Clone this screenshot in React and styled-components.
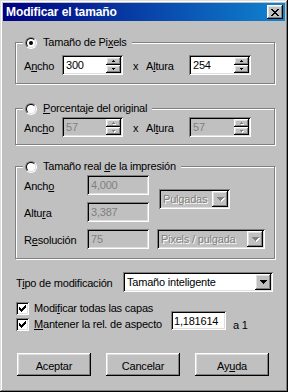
import React from 'react';
import styled, { createGlobalStyle } from 'styled-components';

const GlobalStyle = createGlobalStyle`
  html, body { margin: 0; padding: 0; background: #c0c0c0; }
  body {
    font-family: "Liberation Sans", Arial, sans-serif;
    font-size: 11px;
    letter-spacing: -0.2px;
    color: #000;
  }
  * { box-sizing: border-box; }
  u { text-decoration: underline; text-underline-offset: 1px; }
`;

const pix = (rows) => {
  let d = '';
  rows.forEach((r, y) => {
    [...r].forEach((c, x) => {
      if (c === 'X') d += `M${x} ${y}h1v1h-1z`;
    });
  });
  return d;
};

const CLOSE = [
  'XX....XX',
  '.XX..XX.',
  '..XXXX..',
  '...XX...',
  '..XXXX..',
  '.XX..XX.',
  'XX....XX',
];
const DOWN = ['XXXXXXX', '.XXXXX.', '..XXX..', '...X...'];
const SPIN_UP = ['.X.', 'XXX'];
const SPIN_DOWN = ['XXX', '.X.'];
const CHECK = [
  '......X',
  '.....XX',
  'X...XXX',
  'XX.XXX.',
  'XXXXX..',
  '.XXX...',
  '..X....',
];

const Svg = styled.svg`
  display: block;
  flex-shrink: 0;
`;

const Glyph = ({ rows, disabled }) => {
  const w = rows[0].length;
  const h = rows.length;
  const d = pix(rows);
  return (
    <Svg width={w + 1} height={h + 1} shapeRendering="crispEdges">
      {disabled && <path d={d} fill="#fff" transform="translate(1 1)" />}
      <path d={d} fill={disabled ? '#808080' : '#000'} />
    </Svg>
  );
};

const raised = `
  background: #c0c0c0;
  box-shadow: inset -1px -1px #000, inset 1px 1px #fff, inset -2px -2px #808080, inset 2px 2px #dfdfdf;
`;
const sunken = `
  box-shadow: inset 1px 1px #808080, inset -1px -1px #fff, inset 2px 2px #000, inset -2px -2px #dfdfdf;
`;

const Window = styled.div`
  width: 288px;
  height: 392px;
  padding: 3px;
  background: #c0c0c0;
  box-shadow: inset -1px -1px #000, inset 1px 1px #dfdfdf, inset -2px -2px #808080, inset 2px 2px #fff;
  display: flex;
  flex-direction: column;
`;

const TitleBar = styled.div`
  height: 18px;
  background: linear-gradient(to right, #000080, #1084d0);
  display: flex;
  align-items: center;
  padding: 0 2px 0 3px;
`;

const Title = styled.span`
  color: #fff;
  font-weight: bold;
  font-size: 12px;
  letter-spacing: -0.1px;
`;

const CloseBtn = styled.div`
  ${raised}
  margin-left: auto;
  width: 16px;
  height: 14px;
  display: flex;
  align-items: center;
  justify-content: center;
  padding: 1px 0 0 1px;
`;

const Body = styled.div`
  display: flex;
  flex-direction: column;
  padding: 0 10px 0 12px;
`;

const Group = styled.fieldset`
  margin: ${(p) => p.$top}px 0 0;
  padding: 0;
  min-width: 0;
  border: 1px solid #808080;
  box-shadow: inset 1px 1px #fff, 1px 1px #fff;
`;

const Legend = styled.legend`
  margin-left: 7px;
  padding: 0 5px 0 2px;
  height: 13px;
  display: flex;
  align-items: center;
  gap: 6px;
  background: #c0c0c0;
  line-height: 13px;
`;

const GroupBody = styled.div`
  padding: ${(p) => p.$pt}px 8px ${(p) => p.$pb}px 8px;
`;

const RadioOuter = styled.span`
  width: 12px;
  height: 12px;
  border-radius: 50%;
  border: 1px solid;
  border-color: #808080 #fff #fff #808080;
  display: flex;
  flex-shrink: 0;
`;
const RadioInner = styled.span`
  flex: 1;
  border-radius: 50%;
  border: 1px solid;
  border-color: #000 #dfdfdf #dfdfdf #000;
  background: #fff;
  display: flex;
  align-items: center;
  justify-content: center;
`;
const Dot = styled.span`
  width: 4px;
  height: 4px;
  border-radius: 50%;
  background: #000;
`;

const Radio = ({ checked }) => (
  <RadioOuter>
    <RadioInner>{checked && <Dot />}</RadioInner>
  </RadioOuter>
);

const Row = styled.div`
  display: flex;
  align-items: center;
`;

const Label = styled.span`
  width: ${(p) => (p.$w ? `${p.$w}px` : 'auto')};
  flex-shrink: 0;
  padding-top: 1px;
  white-space: nowrap;
`;

const Times = styled.span`
  width: 23px;
  padding-left: 10px;
  padding-top: 1px;
  flex-shrink: 0;
`;

const Field = styled.div`
  width: ${(p) => p.$w}px;
  height: ${(p) => p.$h || 20}px;
  flex-shrink: 0;
  background: ${(p) => (p.$disabled ? '#c0c0c0' : '#fff')};
  color: ${(p) => (p.$disabled ? '#808080' : '#000')};
  ${sunken}
  padding: 2px;
  display: flex;
  align-items: center;
`;

const FieldText = styled.span`
  flex: 1;
  padding-left: ${(p) => p.$pl ?? 2}px;
  white-space: nowrap;
  overflow: hidden;
  text-shadow: ${(p) => (p.$emboss ? '1px 1px #fff' : 'none')};
`;

const SpinCol = styled.div`
  width: 15px;
  align-self: stretch;
  display: flex;
  flex-direction: column;
`;

const SpinBtn = styled.div`
  ${raised}
  flex: 1;
  display: flex;
  align-items: center;
  justify-content: center;
  padding-left: 1px;
`;

const DropBtn = styled.div`
  ${raised}
  width: 16px;
  align-self: stretch;
  display: flex;
  align-items: center;
  justify-content: center;
  padding: 1px 0 0 1px;
`;

const SpinField = ({ w, value, disabled }) => (
  <Field $w={w} $disabled={disabled}>
    <FieldText>{value}</FieldText>
    <SpinCol>
      <SpinBtn><Glyph rows={SPIN_UP} disabled={disabled} /></SpinBtn>
      <SpinBtn><Glyph rows={SPIN_DOWN} disabled={disabled} /></SpinBtn>
    </SpinCol>
  </Field>
);

const Combo = ({ w, text, disabled, className }) => (
  <Field $w={w} $disabled={disabled} className={className}>
    <FieldText $emboss={disabled}>{text}</FieldText>
    <DropBtn><Glyph rows={DOWN} disabled={disabled} /></DropBtn>
  </Field>
);

const PrintGrid = styled.div`
  display: grid;
  grid-template-columns: 63px 62px 1fr;
  grid-template-rows: repeat(3, 20px);
  row-gap: 7px;
  align-items: center;
`;

const UnitCombo = styled(Combo)`
  grid-column: 3;
  grid-row: ${(p) => p.$row};
  align-self: center;
  margin-left: ${(p) => p.$ml}px;
`;

const TypeRow = styled.div`
  display: flex;
  align-items: center;
  margin-top: 13px;
  padding-left: 1px;
`;

const CheckRow = styled.div`
  display: flex;
  align-items: flex-start;
  margin-top: ${(p) => p.$mt}px;
  padding-left: 1px;
`;

const CheckLabel = styled.label`
  display: flex;
  align-items: center;
  gap: 5px;
  width: ${(p) => (p.$w ? `${p.$w}px` : 'auto')};
  margin-top: ${(p) => p.$mt || 0}px;
  white-space: nowrap;
  line-height: 13px;
`;

const Box = styled.span`
  width: 13px;
  height: 13px;
  flex-shrink: 0;
  background: #fff;
  ${sunken}
  display: flex;
  align-items: center;
  justify-content: center;
`;

const Check = () => (
  <Box>
    <Svg width="7" height="7" shapeRendering="crispEdges">
      <path d={pix(CHECK)} fill="#000" />
    </Svg>
  </Box>
);

const Suffix = styled.span`
  margin: 8px 0 0 7px;
  line-height: 13px;
`;

const ButtonRow = styled.div`
  display: flex;
  gap: 15px;
  margin-top: 21px;
  padding-left: 2px;
`;

const Button = styled.div`
  ${raised}
  width: 74px;
  height: 23px;
  display: flex;
  align-items: center;
  justify-content: center;
  padding-top: 2px;
`;

export default function App() {
  return (
    <>
      <GlobalStyle />
      <Window>
        <TitleBar>
          <Title>Modificar el tamaño</Title>
          <CloseBtn><Glyph rows={CLOSE} /></CloseBtn>
        </TitleBar>
        <Body>
          <Group $top={15}>
            <Legend>
              <Radio checked />
              <span>Tamaño de Pi<u>x</u>els</span>
            </Legend>
            <GroupBody $pt={6} $pb={8}>
              <Row>
                <Label $w={38}>A<u>n</u>cho</Label>
                <SpinField w={61} value="300" />
                <Times>x</Times>
                <Label $w={43}>A<u>l</u>tura</Label>
                <SpinField w={62} value="254" />
              </Row>
            </GroupBody>
          </Group>

          <Group $top={18}>
            <Legend>
              <Radio />
              <span><u>P</u>orcentaje del original</span>
            </Legend>
            <GroupBody $pt={2} $pb={7}>
              <Row>
                <Label $w={38}>Anc<u>h</u>o</Label>
                <SpinField w={61} value="57" disabled />
                <Times>x</Times>
                <Label $w={43}>Al<u>t</u>ura</Label>
                <SpinField w={62} value="57" disabled />
              </Row>
            </GroupBody>
          </Group>

          <Group $top={15}>
            <Legend>
              <Radio />
              <span>Tamaño real <u>d</u>e la impresión</span>
            </Legend>
            <GroupBody $pt={2} $pb={9}>
              <PrintGrid>
                <Label>Anch<u>o</u></Label>
                <Field $w={62} $disabled><FieldText>4,000</FieldText></Field>
                <UnitCombo w={71} text="Pulgadas" disabled $row="1 / span 2" $ml={10} />
                <Label>Altu<u>r</u>a</Label>
                <Field $w={62} $disabled><FieldText>3,387</FieldText></Field>
                <Label>R<u>e</u>solución</Label>
                <Field $w={62} $disabled><FieldText>75</FieldText></Field>
                <UnitCombo w={108} text="Pixels / pulgada" disabled $row="3" $ml={8} />
              </PrintGrid>
            </GroupBody>
          </Group>

          <TypeRow>
            <Label $w={107}>T<u>i</u>po de modificación</Label>
            <Combo w={150} text="Tamaño inteligente" />
          </TypeRow>

          <CheckRow $mt={10}>
            <CheckLabel>
              <Check />
              <span>Modi<u>f</u>icar todas las capas</span>
            </CheckLabel>
          </CheckRow>

          <CheckRow $mt={-4}>
            <CheckLabel $w={155} $mt={7}>
              <Check />
              <span><u>M</u>antener la rel. de aspecto</span>
            </CheckLabel>
            <Field $w={55} $h={19}>
              <FieldText $pl={1}>1,181614</FieldText>
            </Field>
            <Suffix>a 1</Suffix>
          </CheckRow>

          <ButtonRow>
            <Button>Aceptar</Button>
            <Button>Cancelar</Button>
            <Button>Ay<u>u</u>da</Button>
          </ButtonRow>
        </Body>
      </Window>
    </>
  );
}
